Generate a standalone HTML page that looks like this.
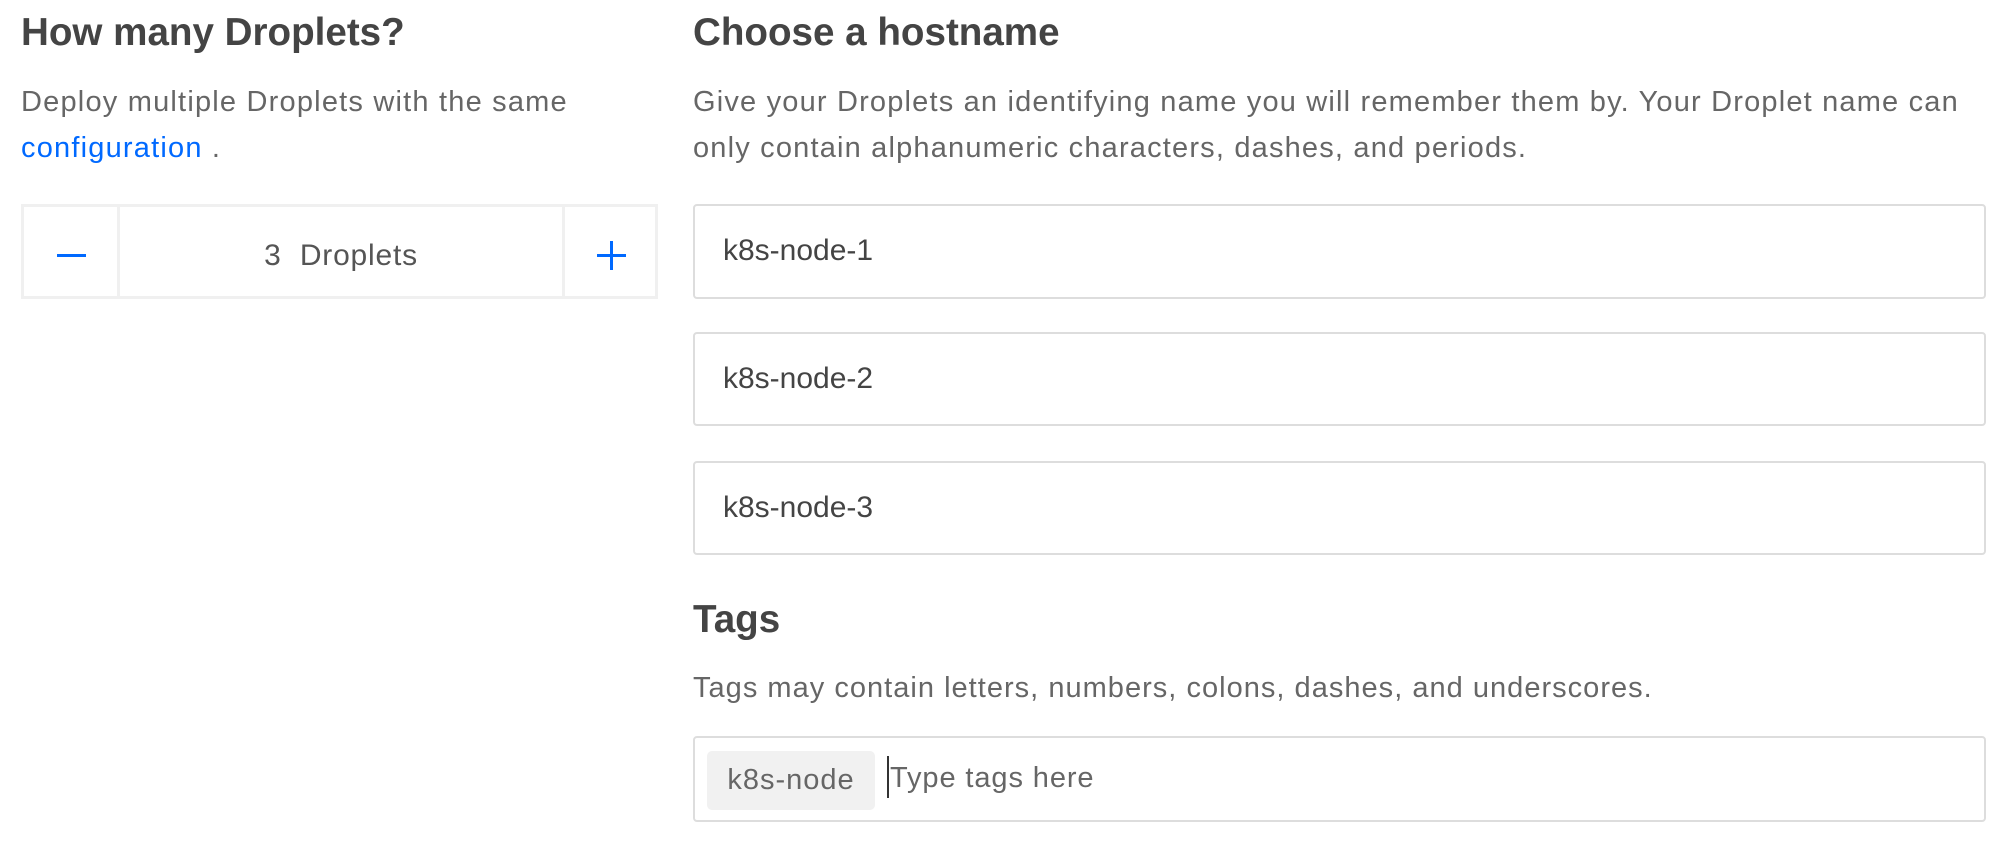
<!DOCTYPE html>
<html><head><meta charset="utf-8"><style>
*{box-sizing:border-box;margin:0;padding:0}
body{width:2012px;height:846px;background:#fff;font-family:"Liberation Sans",sans-serif;color:#444;position:relative;overflow:hidden}
.a{position:absolute;white-space:nowrap}
h2{position:absolute;font-size:38.6px;font-weight:bold;color:#444;line-height:1;letter-spacing:0}
.p{position:absolute;font-size:29px;color:#666;line-height:46px;letter-spacing:1.18px;white-space:nowrap}
.box{position:absolute;border:2px solid #ddd;border-radius:4px;left:693px;width:1293px;background:#fff}
.box span{position:absolute;left:28px;font-size:30px;color:#444}
</style></head><body>
<h2 style="left:21px;top:14px">How many Droplets?</h2>
<div class="p" style="left:21px;top:79px;letter-spacing:1.2px">Deploy multiple Droplets with the same<br><span style="color:#0069ff">configuration</span> .</div>
<div class="a" style="left:21px;top:204px;width:637px;height:95px;border:3px solid #f0f0f0">
 <div class="a" style="left:93px;top:0;width:3px;height:89px;background:#f0f0f0"></div>
 <div class="a" style="left:538px;top:0;width:3px;height:89px;background:#f0f0f0"></div>
 <div class="a" style="left:33px;top:47px;width:29px;height:3px;background:#0069ff"></div>
 <div class="a" style="left:573px;top:47px;width:29px;height:3px;background:#0069ff"></div>
 <div class="a" style="left:586px;top:34px;width:3px;height:29px;background:#0069ff"></div>
 <div class="a" style="left:96px;top:32px;width:442px;text-align:center;font-size:30px;letter-spacing:0.8px;color:#555">3&nbsp; Droplets</div>
</div>
<h2 style="left:693px;top:14px">Choose a hostname</h2>
<div class="p" style="left:693px;top:79px">Give your Droplets an identifying name you will remember them by. Your Droplet name can<br>only contain alphanumeric characters, dashes, and periods.</div>
<div class="box" style="top:204px;height:95px"><span style="top:28px">k8s-node-1</span></div>
<div class="box" style="top:332px;height:94px"><span style="top:28px">k8s-node-2</span></div>
<div class="box" style="top:461px;height:94px"><span style="top:28px">k8s-node-3</span></div>
<h2 style="left:693px;top:601px">Tags</h2>
<div class="p" style="left:693px;top:665px;letter-spacing:1.02px">Tags may contain letters, numbers, colons, dashes, and underscores.</div>
<div class="box" style="top:736px;height:86px">
 <div class="a" style="left:12px;top:13px;width:168px;height:59px;background:#f1f1f1;border-radius:5px;font-size:29px;letter-spacing:1px;color:#666;text-align:center;line-height:59px">k8s-node</div>
 <div class="a" style="left:192px;top:18px;width:2px;height:42px;background:#333"></div>
 <div class="a" style="left:195px;top:24px;font-size:29px;letter-spacing:0.9px;color:#666">Type tags here</div>
</div>
</body></html>
